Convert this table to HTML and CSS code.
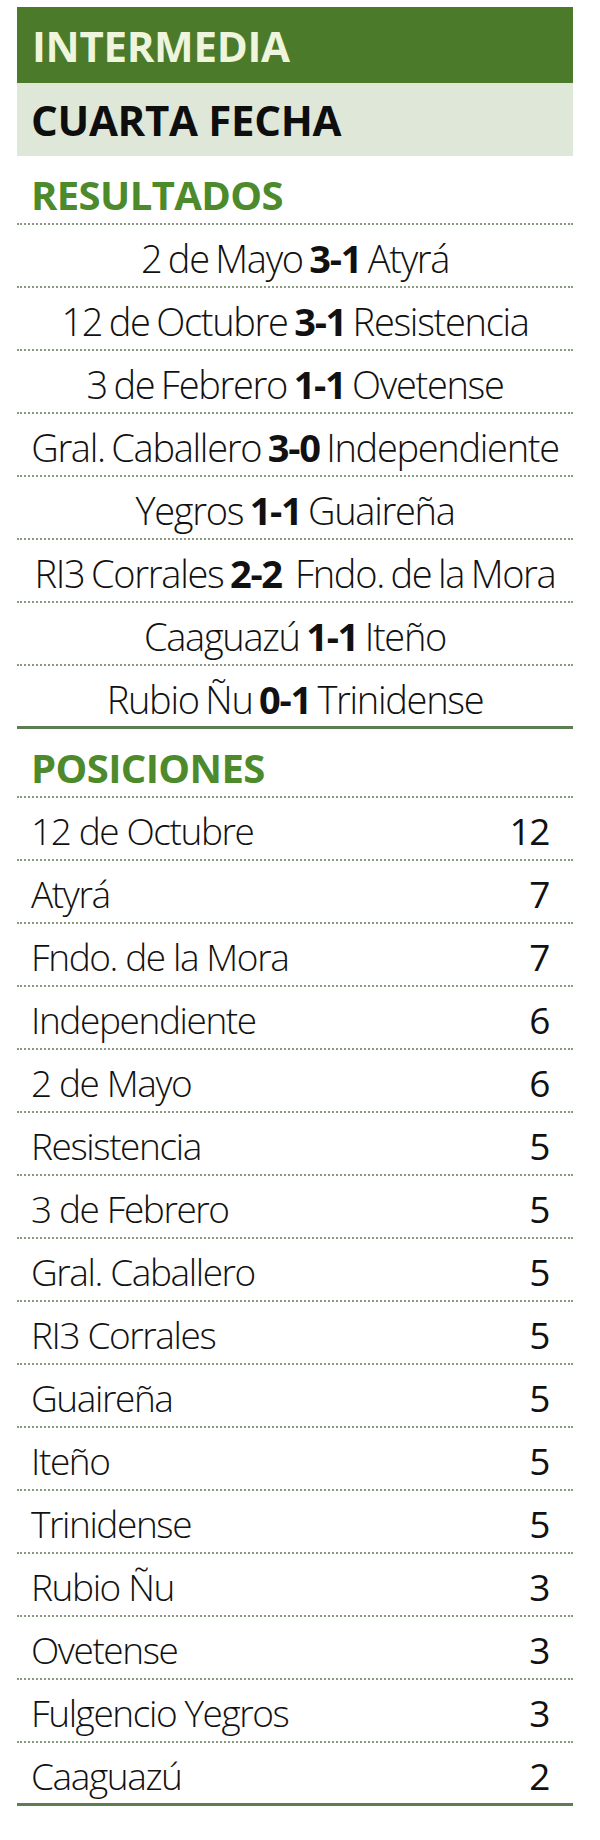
FILE: index.html
```html
<!DOCTYPE html>
<html lang="es">
<head>
<meta charset="utf-8">
<title>Intermedia - Cuarta fecha</title>
<link rel="stylesheet" href="styles.css">
</head>
<body>
<div class="board">
  <div class="title">INTERMEDIA</div>
  <div class="subtitle">CUARTA FECHA</div>
  <div class="section">RESULTADOS</div>
  <ul class="results">
    <li>2 de Mayo <b>3-1</b> Atyrá</li>
    <li>12 de Octubre <b>3-1</b> Resistencia</li>
    <li>3 de Febrero <b>1-1</b> Ovetense</li>
    <li>Gral. Caballero <b>3-0</b> Independiente</li>
    <li>Yegros <b>1-1</b> Guaireña</li>
    <li>RI3 Corrales <b>2-2</b>&nbsp; Fndo. de la Mora</li>
    <li>Caaguazú <b>1-1</b> Iteño</li>
    <li>Rubio Ñu <b>0-1</b> Trinidense</li>
  </ul>
  <div class="section">POSICIONES</div>
  <ul class="standings">
    <li><span>12 de Octubre</span><span>12</span></li>
    <li><span>Atyrá</span><span>7</span></li>
    <li><span>Fndo. de la Mora</span><span>7</span></li>
    <li><span>Independiente</span><span>6</span></li>
    <li><span>2 de Mayo</span><span>6</span></li>
    <li><span>Resistencia</span><span>5</span></li>
    <li><span>3 de Febrero</span><span>5</span></li>
    <li><span>Gral. Caballero</span><span>5</span></li>
    <li><span>RI3 Corrales</span><span>5</span></li>
    <li><span>Guaireña</span><span>5</span></li>
    <li><span>Iteño</span><span>5</span></li>
    <li><span>Trinidense</span><span>5</span></li>
    <li><span>Rubio Ñu</span><span>3</span></li>
    <li><span>Ovetense</span><span>3</span></li>
    <li><span>Fulgencio Yegros</span><span>3</span></li>
    <li><span>Caaguazú</span><span>2</span></li>
  </ul>
</div>
</body>
</html>
```

FILE: styles.css
```css
html, body {
  margin: 0;
  padding: 0;
  background: #ffffff;
}

body {
  font-family: "Open Sans", "Noto Sans", "DejaVu Sans", sans-serif;
  color: #141414;
}

.board {
  width: 556px;
  margin: 7px 0 0 17px;
}

.title {
  height: 76px;
  background: #4b7a2a;
  color: #eef5dc;
  font-weight: 700;
  font-size: 42px;
  line-height: 78px;
  padding-left: 15px;
  letter-spacing: -0.3px;
}

.subtitle {
  height: 73px;
  background: #dfe8d8;
  color: #0e0e0e;
  font-weight: 700;
  font-size: 42px;
  line-height: 74px;
  padding-left: 14px;
  letter-spacing: -0.3px;
}

.section {
  height: 69px;
  box-sizing: border-box;
  padding-top: 15px;
  color: #4c8a2c;
  font-weight: 700;
  font-size: 40px;
  line-height: 48px;
  padding-left: 14px;
  letter-spacing: -0.6px;
  border-bottom: 2px dotted #8a9a80;
}

.results,
.standings {
  list-style: none;
  margin: 0;
  padding: 0;
}

.results li {
  height: 63px;
  box-sizing: border-box;
  border-bottom: 2px dotted #8a9a80;
  text-align: center;
  font-size: 38px;
  line-height: 66px;
  letter-spacing: -1.3px;
  word-spacing: -2px;
  white-space: nowrap;
  font-weight: 300;
  color: #111111;
}

.results li b {
  font-weight: 700;
}

.results li:last-child {
  border-bottom: 3px solid #5d7d52;
}

.standings li {
  height: 63px;
  box-sizing: border-box;
  border-bottom: 2px dotted #8a9a80;
  display: flex;
  justify-content: space-between;
  align-items: center;
  padding: 4px 24px 0 14px;
  font-size: 37px;
  font-weight: 300;
  color: #111111;
  letter-spacing: -1.4px;
  white-space: nowrap;
}

.standings li span:last-child {
  font-weight: 400;
}

.standings li:last-child {
  border-bottom: 3px solid #5d7d52;
}
```
